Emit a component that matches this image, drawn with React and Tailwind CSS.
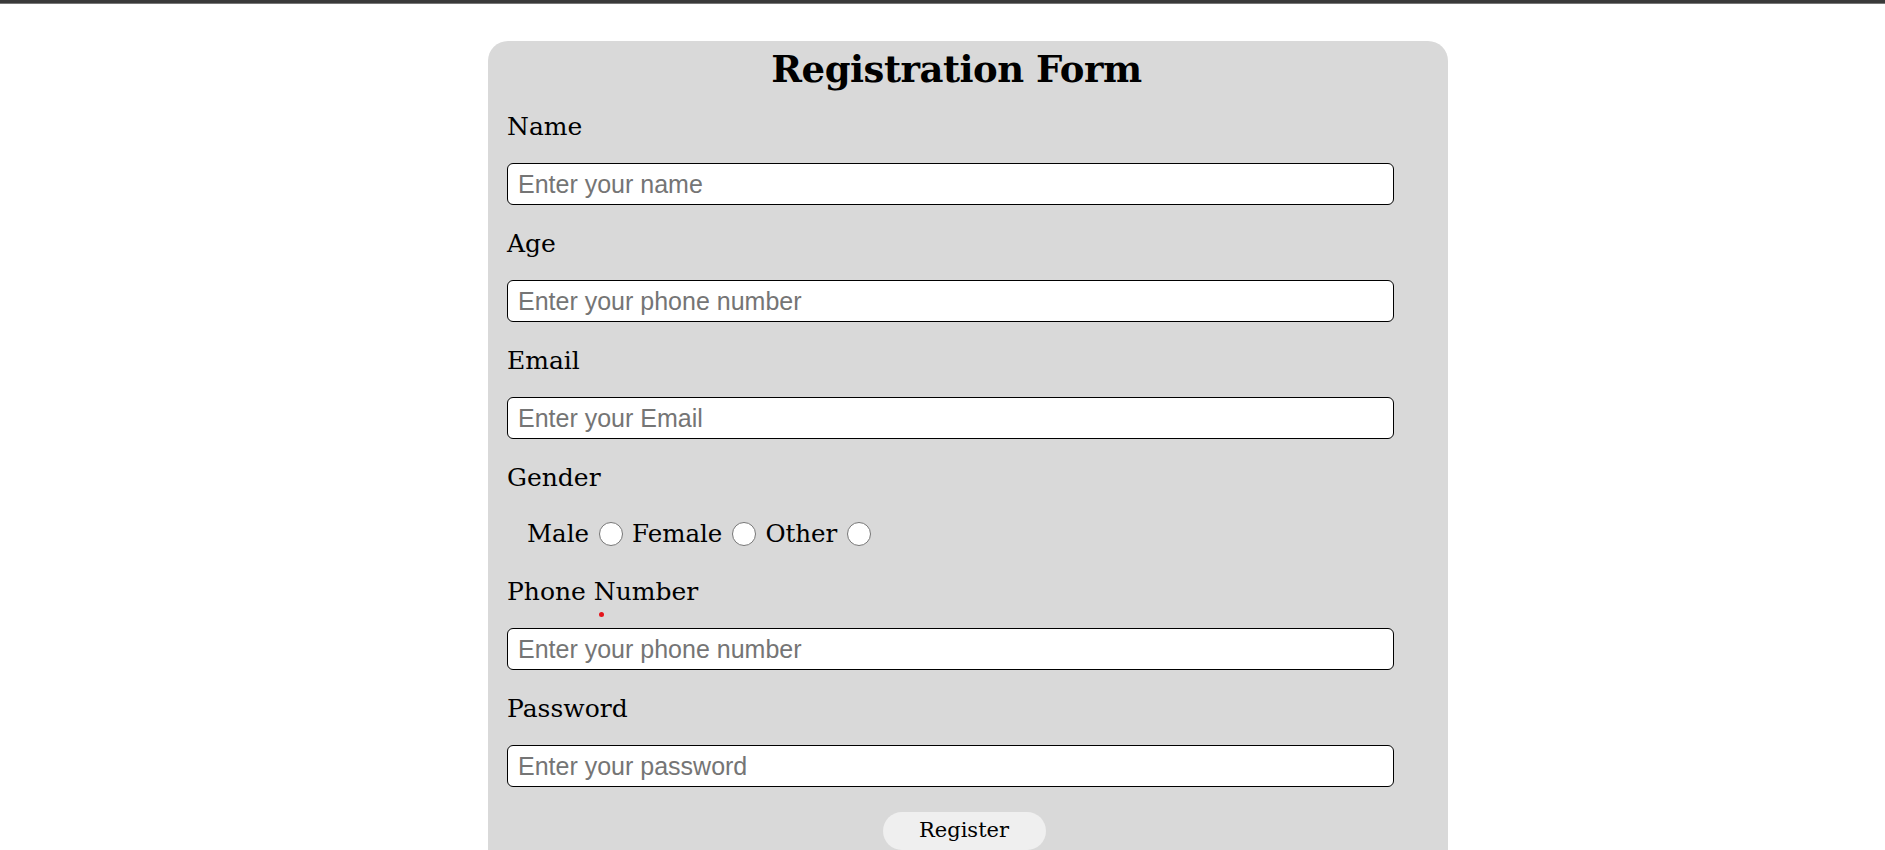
import { useState } from 'react';

const serif = { fontFamily: '"DejaVu Serif", serif' };

const Field = ({ label, placeholder, type = 'text', dot }) => (
  <div className="mb-[19px]">
    <label className="relative block h-[40px] text-[25px] leading-[40px] text-black" style={serif}>
      {label}
      {dot && <span className="absolute left-[92px] top-[40px] h-[5px] w-[5px] rounded-full bg-[#e5141b]" />}
    </label>
    <input
      type={type}
      placeholder={placeholder}
      className="mt-[16px] block h-[42px] w-[887px] rounded-[6px] border border-black bg-white px-[10px] text-[25px] text-black placeholder:text-[#757575] outline-none"
      style={{ fontFamily: '"Liberation Sans", Arial, sans-serif' }}
    />
  </div>
);

const Radio = ({ checked, onClick }) => (
  <button
    type="button"
    onClick={onClick}
    className="flex h-[24px] w-[24px] items-center justify-center rounded-full border-[1.5px] border-[#767676] bg-white"
  >
    {checked && <span className="h-[14px] w-[14px] rounded-full bg-[#0075ff]" />}
  </button>
);

export default function App() {
  const [gender, setGender] = useState('');

  return (
    <div className="min-h-screen bg-white">
      {/* barre du haut */}
      <div className="h-[4px] bg-[#3a3a3a] border-b border-[#777]" />

      <div className="ml-[488px] mt-[37px] w-[960px] rounded-t-[20px] bg-[#d9d9d9] pl-[19px] pr-[16px] pt-[4px] pb-[20px]">
        <h1 className="pr-[26px] text-center text-[37px] font-bold leading-[48px] tracking-[-0.5px] text-black" style={serif}>
          Registration Form
        </h1>

        <form className="mt-[14px]" onSubmit={(e) => e.preventDefault()}>
          <Field label="Name" placeholder="Enter your name" />
          <Field label="Age" placeholder="Enter your phone number" />
          <Field label="Email" placeholder="Enter your Email" type="email" />

          <div className="h-[40px] text-[25px] leading-[40px] text-black" style={serif}>Gender</div>
          <div className="mt-[16px] flex h-[40px] items-center pl-[20px] text-[24.5px] text-black" style={serif}>
            <span>Male</span>
            <span className="ml-[10px] mr-[9px]"><Radio checked={gender === 'm'} onClick={() => setGender('m')} /></span>
            <span>Female</span>
            <span className="ml-[10px] mr-[9px]"><Radio checked={gender === 'f'} onClick={() => setGender('f')} /></span>
            <span>Other</span>
            <span className="ml-[10px]"><Radio checked={gender === 'o'} onClick={() => setGender('o')} /></span>
          </div>

          <div className="mt-[18px]">
            <Field label="Phone Number" placeholder="Enter your phone number" dot />
            <Field label="Password" placeholder="Enter your password" type="password" />
          </div>

          {/* la marge se confond avec le mb du dernier champ */}
          <div className="mt-[25px] flex justify-center pr-[11px]">
            <button
              type="submit"
              className="h-[38px] w-[163px] rounded-[19px] bg-[#efefef] text-[21px] text-black"
              style={serif}
            >
              Register
            </button>
          </div>
        </form>
      </div>
    </div>
  );
}
